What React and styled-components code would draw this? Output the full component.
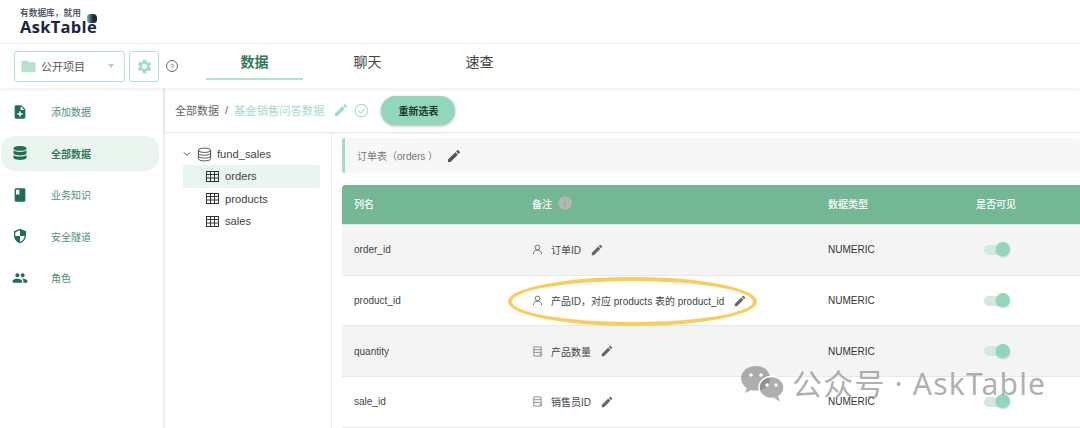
import React from 'react';
import styled, { createGlobalStyle } from 'styled-components';

const GlobalStyle = createGlobalStyle`
  html, body {
    margin: 0;
    padding: 0;
    background: #fff;
    font-family: "Liberation Sans", "Noto Sans CJK SC", sans-serif;
  }
  * { box-sizing: border-box; }
`;

const Page = styled.div`
  position: relative;
  width: 1080px;
  height: 428px;
  overflow: hidden;
  background: #fff;
  color: #333;
`;

const LogoBar = styled.header`
  height: 44px;
  padding: 8px 0 0 20px;
  border-bottom: 1px solid #f0f0f0;
`;

const Logo = styled.div`
  position: relative;
  width: 80px;
  color: #1c2440;
`;

const Slogan = styled.div`
  font-size: 8.7px;
  line-height: 10px;
  font-weight: 500;
  color: #3a3f55;
`;

const LogoName = styled.div`
  font-family: "Open Sans", sans-serif;
  font-size: 16.5px;
  line-height: 17px;
  font-weight: 700;
  letter-spacing: 0.3px;
`;

const LogoMark = styled.span`
  position: absolute;
  left: 67px;
  top: 6px;
  width: 10px;
  height: 9px;
  border-radius: 3px 4px 3px 3px;
  background: linear-gradient(90deg, #6fc3ad, #1d2b3f 60%);
`;

const Toolbar = styled.div`
  display: flex;
  align-items: center;
  height: 44px;
  padding-left: 14px;
  box-shadow: 0 2px 3px rgba(0, 0, 0, 0.06);
  position: relative;
`;

const ProjectSelect = styled.div`
  display: flex;
  align-items: center;
  width: 111px;
  height: 31px;
  padding: 0 8px 0 5px;
  border: 1px solid #b4e2cd;
  border-radius: 3px;
  font-size: 11px;
  color: #555;
`;

const SelectLabel = styled.span`
  margin-left: 4px;
  flex: 1;
`;

const Caret = styled.span`
  width: 0;
  height: 0;
  margin-right: 2px;
  border-left: 3.5px solid transparent;
  border-right: 3.5px solid transparent;
  border-top: 4px solid #c4c4c4;
`;

const GearButton = styled.div`
  display: flex;
  align-items: center;
  justify-content: center;
  width: 30px;
  height: 31px;
  margin-left: 4px;
  border: 1px solid #b4e2cd;
  border-radius: 3px;
`;

const HelpMark = styled.span`
  display: flex;
  align-items: center;
  justify-content: center;
  width: 12px;
  height: 12px;
  margin-left: 7px;
  border: 1px solid #666;
  border-radius: 50%;
  font-size: 8px;
  color: #666;
`;

const Tabs = styled.nav`
  display: flex;
  margin-left: 28px;
  height: 100%;
`;

const Tab = styled.div`
  display: flex;
  align-items: center;
  justify-content: center;
  width: 97px;
  margin-right: ${props => props.$gap}px;
  height: 36px;
  font-size: 14px;
  font-weight: ${props => (props.$active ? 600 : 400)};
  color: ${props => (props.$active ? '#2f7a58' : '#444')};
  border-bottom: ${props => (props.$active ? '2px solid #b4e2cd' : '2px solid transparent')};
`;

const Body = styled.div`
  display: flex;
  height: 340px;
`;

const Sidebar = styled.aside`
  width: 165px;
  flex-shrink: 0;
  padding: 6px 4px 0 1px;
  border-right: 2px solid #eeeeee;
`;

const NavItem = styled.div`
  display: flex;
  align-items: center;
  height: 35px;
  margin-bottom: 6.5px;
  padding-left: 11px;
  border-radius: 14px;
  background: ${props => (props.$active ? '#eaf5f0' : 'transparent')};
`;

const NavLabel = styled.span`
  margin-left: 23px;
  font-size: 10px;
  font-weight: ${props => (props.$active ? 600 : 400)};
  color: ${props => (props.$active ? '#2f7a58' : '#4f9175')};
`;

const Content = styled.main`
  flex: 1;
  min-width: 0;
`;

const Breadcrumb = styled.div`
  display: flex;
  align-items: center;
  height: 44px;
  padding-left: 10px;
  font-size: 11px;
  color: #666;
  box-shadow: 0 1px 2px rgba(0, 0, 0, 0.12);
  position: relative;
`;

const Separator = styled.span`
  margin: 0 6px;
`;

const CurrentCrumb = styled.span`
  color: #a5dcc4;
  font-size: 11.3px;
  margin-right: 9px;
`;

const CheckMark = styled.span`
  display: flex;
  margin-left: 5px;
`;

const ReselectButton = styled.button`
  width: 74px;
  height: 29px;
  margin-left: 12px;
  border: none;
  border-radius: 15px;
  background: #92d6bb;
  color: #1d3a2d;
  font-family: inherit;
  font-size: 10px;
  font-weight: 600;
  box-shadow: 0 1px 3px rgba(0, 0, 0, 0.3);
`;

const Split = styled.div`
  display: flex;
  height: 296px;
`;

const Tree = styled.div`
  width: 167px;
  flex-shrink: 0;
  padding: 11px 11px 0 18px;
  border-right: 1px solid #eeeeee;
`;

const TreeRoot = styled.div`
  display: flex;
  align-items: center;
  height: 22px;
  font-size: 11.2px;
  color: #444;
`;

const TreeLeaf = styled.div`
  display: flex;
  align-items: center;
  height: 22.5px;
  padding-left: 23px;
  border-radius: 2px;
  font-size: 11.2px;
  color: #444;
  background: ${props => (props.$active ? '#e8f5f0' : 'transparent')};
`;

const LeafIcon = styled.span`
  display: flex;
  margin-right: 6px;
`;

const RootIcon = styled.span`
  display: flex;
  margin: 0 5px 0 6px;
`;

const Main = styled.div`
  flex: 1;
  min-width: 0;
  padding: 6px 0 0 10px;
`;

const TableTitle = styled.div`
  display: flex;
  align-items: center;
  height: 35px;
  padding-left: 12px;
  border-left: 3px solid #a5dcc4;
  border-radius: 2px;
  background: #f7f7f7;
  font-size: 10px;
  color: #777;
`;

const TitleEdit = styled.span`
  display: flex;
  margin-left: 8px;
`;

const DataTable = styled.div`
  margin-top: 12px;
  border-top-left-radius: 3px;
  overflow: hidden;
`;

const HeadRow = styled.div`
  display: grid;
  grid-template-columns: 178px 296px 148px 1fr;
  align-items: center;
  height: 40px;
  padding: 0 0 3px 12px;
  background: #74b795;
  border-radius: 3px 0 0 0;
  font-size: 10px;
  color: #fff;
  border-bottom: 1px solid #dfe9e3;
`;

const HeadCell = styled.div`
  display: flex;
  align-items: center;
  font-weight: 500;
`;

const InfoIcon = styled.span`
  display: flex;
  margin-left: 5px;
`;

const Row = styled.div`
  display: grid;
  grid-template-columns: 178px 296px 148px 1fr;
  align-items: center;
  height: 50.7px;
  padding-left: 12px;
  background: ${props => (props.$shaded ? '#f4f4f4' : '#fff')};
  border-bottom: 1px solid #e8e8e8;
  font-size: 10px;
  color: #444;
`;

const Note = styled.div`
  display: flex;
  align-items: center;
`;

const NoteIcon = styled.span`
  display: flex;
  margin-right: 8px;
`;

const NoteEdit = styled.span`
  display: flex;
  margin-left: 9px;
`;

const TypeCell = styled.div`
  font-size: 10px;
  color: #333;
`;

const Toggle = styled.div`
  position: relative;
  width: 22px;
  height: 10px;
  margin-left: 8px;
  border-radius: 5px;
  background: #cfeadf;
`;

const Knob = styled.span`
  position: absolute;
  top: -2.5px;
  left: 12px;
  width: 14px;
  height: 14px;
  border-radius: 50%;
  background: #92d6bb;
  box-shadow: 0 1px 2px rgba(0, 0, 0, 0.2);
`;

const Highlight = styled.div`
  position: absolute;
  left: 508px;
  top: 277px;
  width: 249px;
  height: 49px;
  border: 4px solid #fbcc5c;
  border-radius: 50%;
  pointer-events: none;
`;

const Watermark = styled.div`
  position: absolute;
  left: 741px;
  top: 364px;
  display: flex;
  align-items: center;
  font-family: "Noto Sans", "Noto Sans CJK SC", sans-serif;
  font-size: 30px;
  line-height: 40px;
  letter-spacing: 1.2px;
  color: rgba(130, 130, 130, 0.65);
  pointer-events: none;
`;

const WatermarkText = styled.span`
  margin-left: 8px;
`;

const Icon = ({ d, size = 16, color = '#1f6f4f' }) => (
  <svg width={size} height={size} viewBox="0 0 24 24" fill={color}>
    <path d={d} />
  </svg>
);

const paths = {
  noteAdd: 'M14 2H6c-1.1 0-1.99.9-1.99 2L4 20c0 1.1.89 2 1.99 2H18c1.1 0 2-.9 2-2V8l-6-6zm2 14h-3v3h-2v-3H8v-2h3v-3h2v3h3v2zm-3-7V3.5L18.5 9H13z',
  book: 'M18 2H6c-1.1 0-2 .9-2 2v16c0 1.1.9 2 2 2h12c1.1 0 2-.9 2-2V4c0-1.1-.9-2-2-2zM6 4h5v8l-2.5-1.5L6 12V4z',
  shield: 'M12 1L3 5v6c0 5.55 3.84 10.74 9 12 5.16-1.26 9-6.45 9-12V5l-9-4zm0 10.99h7c-.53 4.12-3.28 7.79-7 8.94V12H5V6.3l7-3.11v8.8z',
  people: 'M16 11c1.66 0 2.99-1.34 2.99-3S17.66 5 16 5c-1.66 0-3 1.34-3 3s1.34 3 3 3zm-8 0c1.66 0 2.99-1.34 2.99-3S9.66 5 8 5C6.34 5 5 6.34 5 8s1.34 3 3 3zm0 2c-2.33 0-7 1.17-7 3.5V19h14v-2.5c0-2.33-4.67-3.5-7-3.5zm8 0c-.29 0-.62.02-.97.05 1.16.84 1.97 1.97 1.97 3.45V19h6v-2.5c0-2.33-4.67-3.5-7-3.5z',
  edit: 'M3 17.25V21h3.75L17.81 9.94l-3.75-3.75L3 17.25zM20.71 7.04c.39-.39.39-1.02 0-1.41l-2.34-2.34c-.39-.39-1.02-.39-1.41 0l-1.83 1.83 3.75 3.75 1.83-1.83z',
  gear: 'M19.14 12.94c.04-.3.06-.61.06-.94 0-.32-.02-.64-.07-.94l2.03-1.58c.18-.14.23-.41.12-.61l-1.92-3.32c-.12-.22-.37-.29-.59-.22l-2.39.96c-.5-.38-1.03-.7-1.62-.94l-.36-2.54c-.04-.24-.24-.41-.48-.41h-3.84c-.24 0-.43.17-.47.41l-.36 2.54c-.59.24-1.13.57-1.62.94l-2.39-.96c-.22-.08-.47 0-.59.22L2.74 8.87c-.12.21-.08.47.12.61l2.03 1.58c-.05.3-.09.63-.09.94s.02.64.07.94l-2.03 1.58c-.18.14-.23.41-.12.61l1.92 3.32c.12.22.37.29.59.22l2.39-.96c.5.38 1.03.7 1.62.94l.36 2.54c.05.24.24.41.48.41h3.84c.24 0 .44-.17.47-.41l.36-2.54c.59-.24 1.13-.56 1.62-.94l2.39.96c.22.08.47 0 .59-.22l1.92-3.32c.12-.22.07-.47-.12-.61l-2.01-1.58zM12 15.6c-1.98 0-3.6-1.62-3.6-3.6s1.62-3.6 3.6-3.6 3.6 1.62 3.6 3.6-1.62 3.6-3.6 3.6z',
  folder: 'M10 4H4c-1.1 0-1.99.9-1.99 2L2 18c0 1.1.9 2 2 2h16c1.1 0 2-.9 2-2V8c0-1.1-.9-2-2-2h-8l-2-2z',
  info: 'M12 2C6.48 2 2 6.48 2 12s4.48 10 10 10 10-4.48 10-10S17.52 2 12 2zm1 15h-2v-6h2v6zm0-8h-2V7h2v2z',
};

const DatabaseSolid = () => (
  <svg width="16" height="16" viewBox="0 0 16 16" fill="#1f6f4f">
    <path d="M1.5 3.4C1.5 1.9 4.4 1 8 1s6.5.9 6.5 2.4S11.6 5.8 8 5.8 1.5 4.9 1.5 3.4z" />
    <path d="M1.5 5.3C2.7 6.5 5.2 7 8 7s5.3-.5 6.5-1.7V8C14.5 9.5 11.6 10.4 8 10.4S1.5 9.5 1.5 8z" />
    <path d="M1.5 9.9c1.2 1.2 3.7 1.7 6.5 1.7s5.3-.5 6.5-1.7v2.7C14.5 14.1 11.6 15 8 15s-6.5-.9-6.5-2.4z" />
  </svg>
);

const DatabaseOutline = () => (
  <svg width="15" height="15" viewBox="0 0 16 16" fill="none" stroke="#444" strokeWidth="1">
    <ellipse cx="8" cy="3.5" rx="6.5" ry="2.3" />
    <path d="M1.5 3.5v9c0 1.3 2.9 2.3 6.5 2.3s6.5-1 6.5-2.3v-9" />
    <path d="M1.5 6.5c0 1.3 2.9 2.3 6.5 2.3s6.5-1 6.5-2.3" />
    <path d="M1.5 9.5c0 1.3 2.9 2.3 6.5 2.3s6.5-1 6.5-2.3" />
  </svg>
);

const TableGlyph = () => (
  <svg width="13" height="11" viewBox="0 0 13 11" fill="none" stroke="#333" strokeWidth="1">
    <rect x="0.5" y="0.5" width="12" height="10" />
    <path d="M0.5 3.5h12M0.5 7h12M4.5 0.5v10M8.5 0.5v10" />
  </svg>
);

const Chevron = () => (
  <svg width="8" height="8" viewBox="0 0 8 8" fill="none" stroke="#444" strokeWidth="1">
    <path d="M1 2.5l3 3 3-3" />
  </svg>
);

const CircleCheck = () => (
  <svg width="15" height="15" viewBox="0 0 16 16" fill="none" stroke="#a5dcc4" strokeWidth="1.1">
    <circle cx="8" cy="8" r="6.7" />
    <path d="M4.7 8.2l2.4 2.3 4.3-4.4" />
  </svg>
);

const PersonGlyph = () => (
  <svg width="11" height="11" viewBox="0 0 12 12" fill="none" stroke="#666" strokeWidth="1">
    <circle cx="6" cy="3.8" r="2.6" />
    <path d="M1.5 11c0-2.6 2-4.4 4.5-4.4s4.5 1.8 4.5 4.4" />
  </svg>
);

const ColumnGlyph = () => (
  <svg width="11" height="11" viewBox="0 0 12 12" fill="none" stroke="#888" strokeWidth="1">
    <path d="M2 1h8v10H2zM2 4h8M2 7h8M8 9.5h3" />
  </svg>
);

const WeChat = () => (
  <svg width="43" height="36" viewBox="0 0 43 36" fill="currentColor">
    <path d="M15 0C6.7 0 0 5.5 0 12.3c0 3.9 2.2 7.3 5.7 9.6L4.2 27l6-3.1c1.5.4 3 .6 4.8.6 8.3 0 14-5.4 14-12.2S23.3 0 15 0z" />
    <ellipse cx="30.5" cy="21.5" rx="12.5" ry="11" stroke="#fff" strokeWidth="1.5" />
    <path d="M37 30l2 5.5-6-3.500z" />
    <circle cx="10" cy="9" r="1.8" fill="#fff" />
    <circle cx="20" cy="9" r="1.8" fill="#fff" />
    <circle cx="26" cy="19" r="1.7" fill="#fff" />
    <circle cx="35" cy="19" r="1.7" fill="#fff" />
  </svg>
);

const navItems = [
  { label: '添加数据', icon: <Icon d={paths.noteAdd} /> },
  { label: '全部数据', icon: <DatabaseSolid />, active: true },
  { label: '业务知识', icon: <Icon d={paths.book} /> },
  { label: '安全隧道', icon: <Icon d={paths.shield} /> },
  { label: '角色', icon: <Icon d={paths.people} /> },
];

const columns = [
  { name: 'order_id', note: '订单ID', person: true },
  { name: 'product_id', note: '产品ID，对应 products 表的 product_id', person: true },
  { name: 'quantity', note: '产品数量' },
  { name: 'sale_id', note: '销售员ID' },
];

export default function App() {
  return (
    <Page>
      <GlobalStyle />
      <LogoBar>
        <Logo>
          <Slogan>有数据库，就用</Slogan>
          <LogoName>AskTable</LogoName>
          <LogoMark />
        </Logo>
      </LogoBar>

      <Toolbar>
        <ProjectSelect>
          <Icon d={paths.folder} size={17} color="#b4e2cd" />
          <SelectLabel>公开项目</SelectLabel>
          <Caret />
        </ProjectSelect>
        <GearButton>
          <Icon d={paths.gear} size={17} color="#a5dcc4" />
        </GearButton>
        <HelpMark>?</HelpMark>
        <Tabs>
          <Tab $active $gap={16}>数据</Tab>
          <Tab $gap={15}>聊天</Tab>
          <Tab $gap={0}>速查</Tab>
        </Tabs>
      </Toolbar>

      <Body>
        <Sidebar>
          {navItems.map(item => (
            <NavItem key={item.label} $active={item.active}>
              {item.icon}
              <NavLabel $active={item.active}>{item.label}</NavLabel>
            </NavItem>
          ))}
        </Sidebar>

        <Content>
          <Breadcrumb>
            全部数据
            <Separator>/</Separator>
            <CurrentCrumb>基金销售问答数据</CurrentCrumb>
            <Icon d={paths.edit} size={16} color="#a5dcc4" />
            <CheckMark><CircleCheck /></CheckMark>
            <ReselectButton>重新选表</ReselectButton>
          </Breadcrumb>

          <Split>
            <Tree>
              <TreeRoot>
                <Chevron />
                <RootIcon><DatabaseOutline /></RootIcon>
                fund_sales
              </TreeRoot>
              {['orders', 'products', 'sales'].map(name => (
                <TreeLeaf key={name} $active={name === 'orders'}>
                  <LeafIcon><TableGlyph /></LeafIcon>
                  {name}
                </TreeLeaf>
              ))}
            </Tree>

            <Main>
              <TableTitle>
                订单表（orders ）
                <TitleEdit><Icon d={paths.edit} size={16} color="#555" /></TitleEdit>
              </TableTitle>
              <DataTable>
                <HeadRow>
                  <HeadCell>列名</HeadCell>
                  <HeadCell>
                    备注
                    <InfoIcon><Icon d={paths.info} size={16} color="#b5b5b5" /></InfoIcon>
                  </HeadCell>
                  <HeadCell>数据类型</HeadCell>
                  <HeadCell>是否可见</HeadCell>
                </HeadRow>
                {columns.map((col, i) => (
                  <Row key={col.name} $shaded={i % 2 === 0}>
                    <div>{col.name}</div>
                    <Note>
                      <NoteIcon>{col.person ? <PersonGlyph /> : <ColumnGlyph />}</NoteIcon>
                      {col.note}
                      <NoteEdit><Icon d={paths.edit} size={14} color="#666" /></NoteEdit>
                    </Note>
                    <TypeCell>NUMERIC</TypeCell>
                    <Toggle><Knob /></Toggle>
                  </Row>
                ))}
              </DataTable>
            </Main>
          </Split>
        </Content>
      </Body>

      <Highlight />
      <Watermark>
        <WeChat />
        <WatermarkText>公众号 · AskTable</WatermarkText>
      </Watermark>
    </Page>
  );
}
